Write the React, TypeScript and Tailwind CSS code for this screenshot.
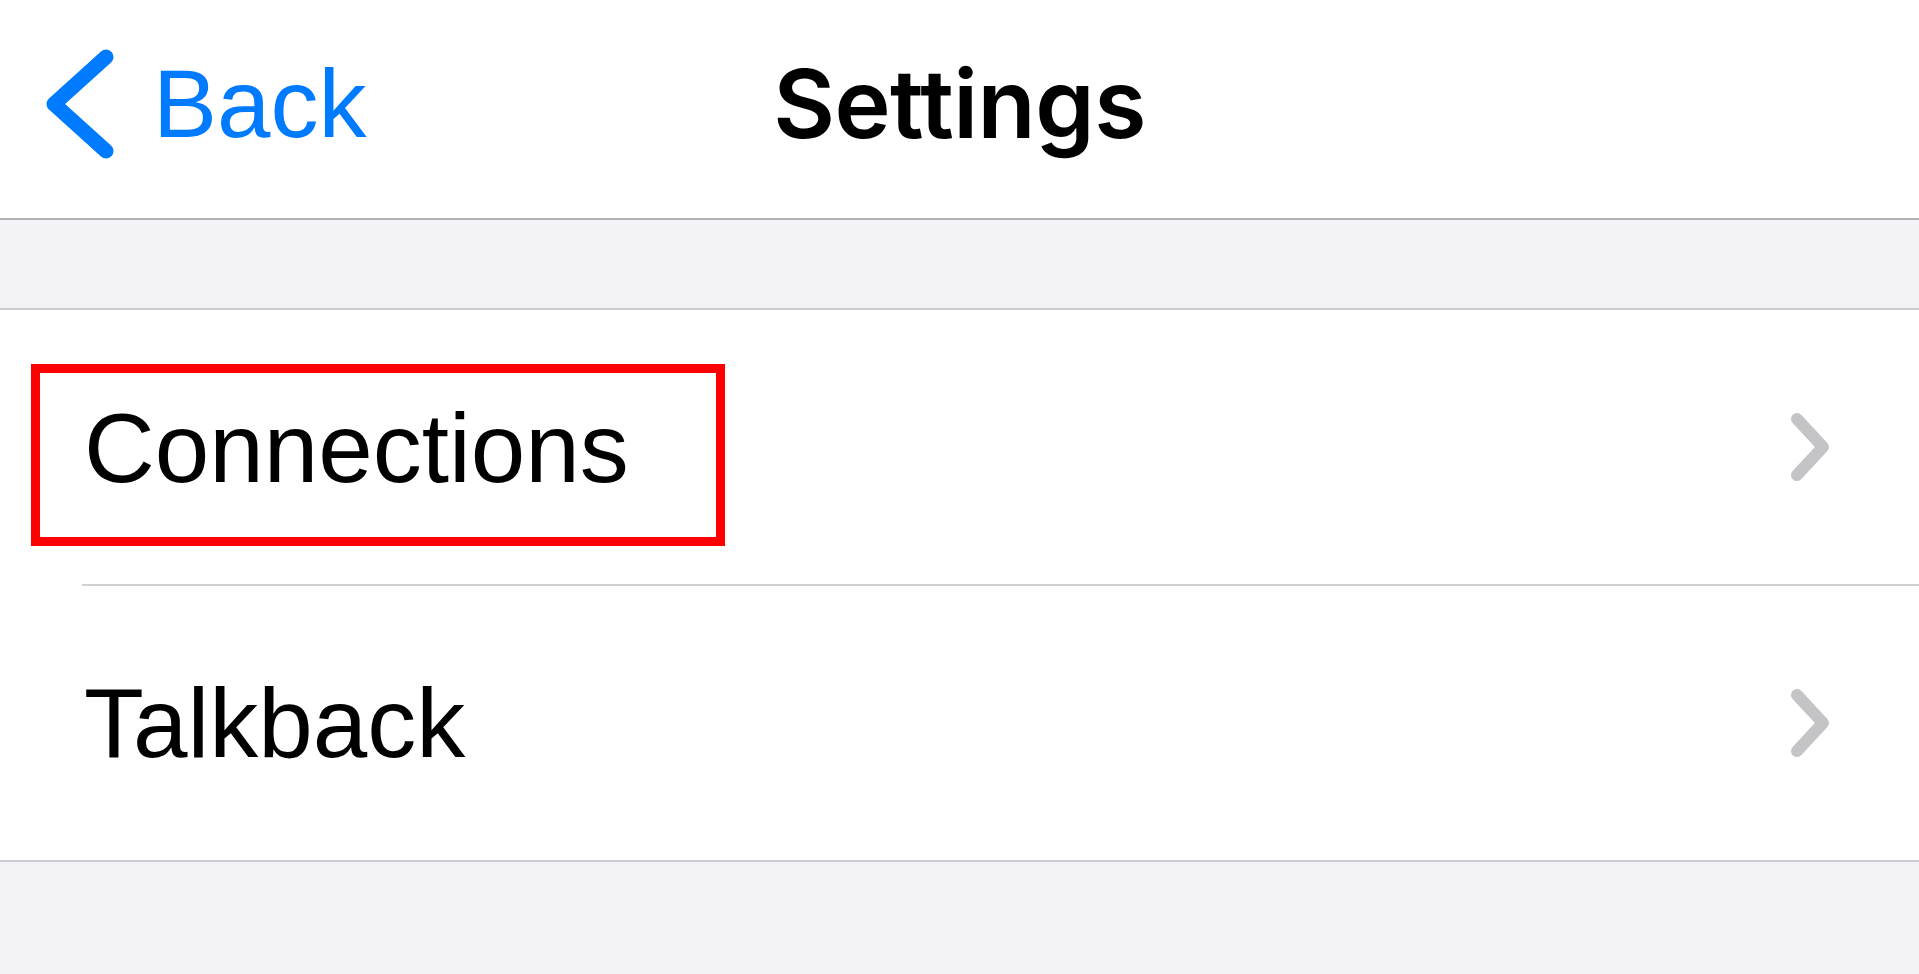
import React from "react";

const font = { fontFamily: '"Liberation Sans", Arial, sans-serif' };
const titleFont = { fontFamily: 'Inter, "Liberation Sans", Arial, sans-serif' };

function BackChevron() {
  return (
    <svg width="74" height="118" viewBox="0 0 74 118" className="shrink-0">
      <path
        d="M66 13 L14 60 L66 107"
        fill="none"
        stroke="#007aff"
        strokeWidth="15"
        strokeLinecap="round"
        strokeLinejoin="round"
      />
    </svg>
  );
}

function RowChevron() {
  return (
    <svg width="48" height="80" viewBox="0 0 48 80" className="shrink-0 self-center">
      <path
        d="M11 12 L37 40 L11 68"
        fill="none"
        stroke="#c4c4c7"
        strokeWidth="12"
        strokeLinecap="round"
        strokeLinejoin="round"
      />
    </svg>
  );
}

export default function App() {
  return (
    <div
      className="min-h-screen w-full bg-[#f2f2f7] text-black antialiased"
      style={font}
    >
      <header className="grid h-[220px] grid-cols-[1fr_auto_1fr] border-b-2 border-[#b3b3b5] bg-white">
        <div className="flex h-full items-center pb-[12px] pl-[40px]">
          <BackChevron />
          <span className="ml-[39px] pt-[2px] text-[96px] leading-none text-[#007aff]">
            Back
          </span>
        </div>
        <div className="flex h-full items-center pb-[14px]">
          <span
            className="pt-[2px] text-[95px] font-semibold leading-none tracking-[-0.5px]"
            style={titleFont}
          >
            Settings
          </span>
        </div>
        <div />
      </header>

      <div className="h-[90px] border-b-2 border-[#cbcbcf]" />

      <div className="bg-white">
        <div className="flex h-[274px] items-start justify-between pr-[85px]">
          <div className="ml-[31px] mt-[54px] flex h-[182px] w-[694px] items-start border-[9px] border-[#ff0000] pl-[44px] pt-[26px]">
            <span className="text-[98px] leading-none">Connections</span>
          </div>
          <RowChevron />
        </div>
        <div className="pl-[82px]">
          <div className="h-[2px] bg-[#d0d0d3]" />
        </div>
        <div className="flex h-[274px] items-center justify-between pl-[84px] pr-[85px]">
          <span className="text-[98px] leading-none">Talkback</span>
          <RowChevron />
        </div>
      </div>
      <div className="h-[2px] bg-[#cbcbcf]" />
    </div>
  );
}
